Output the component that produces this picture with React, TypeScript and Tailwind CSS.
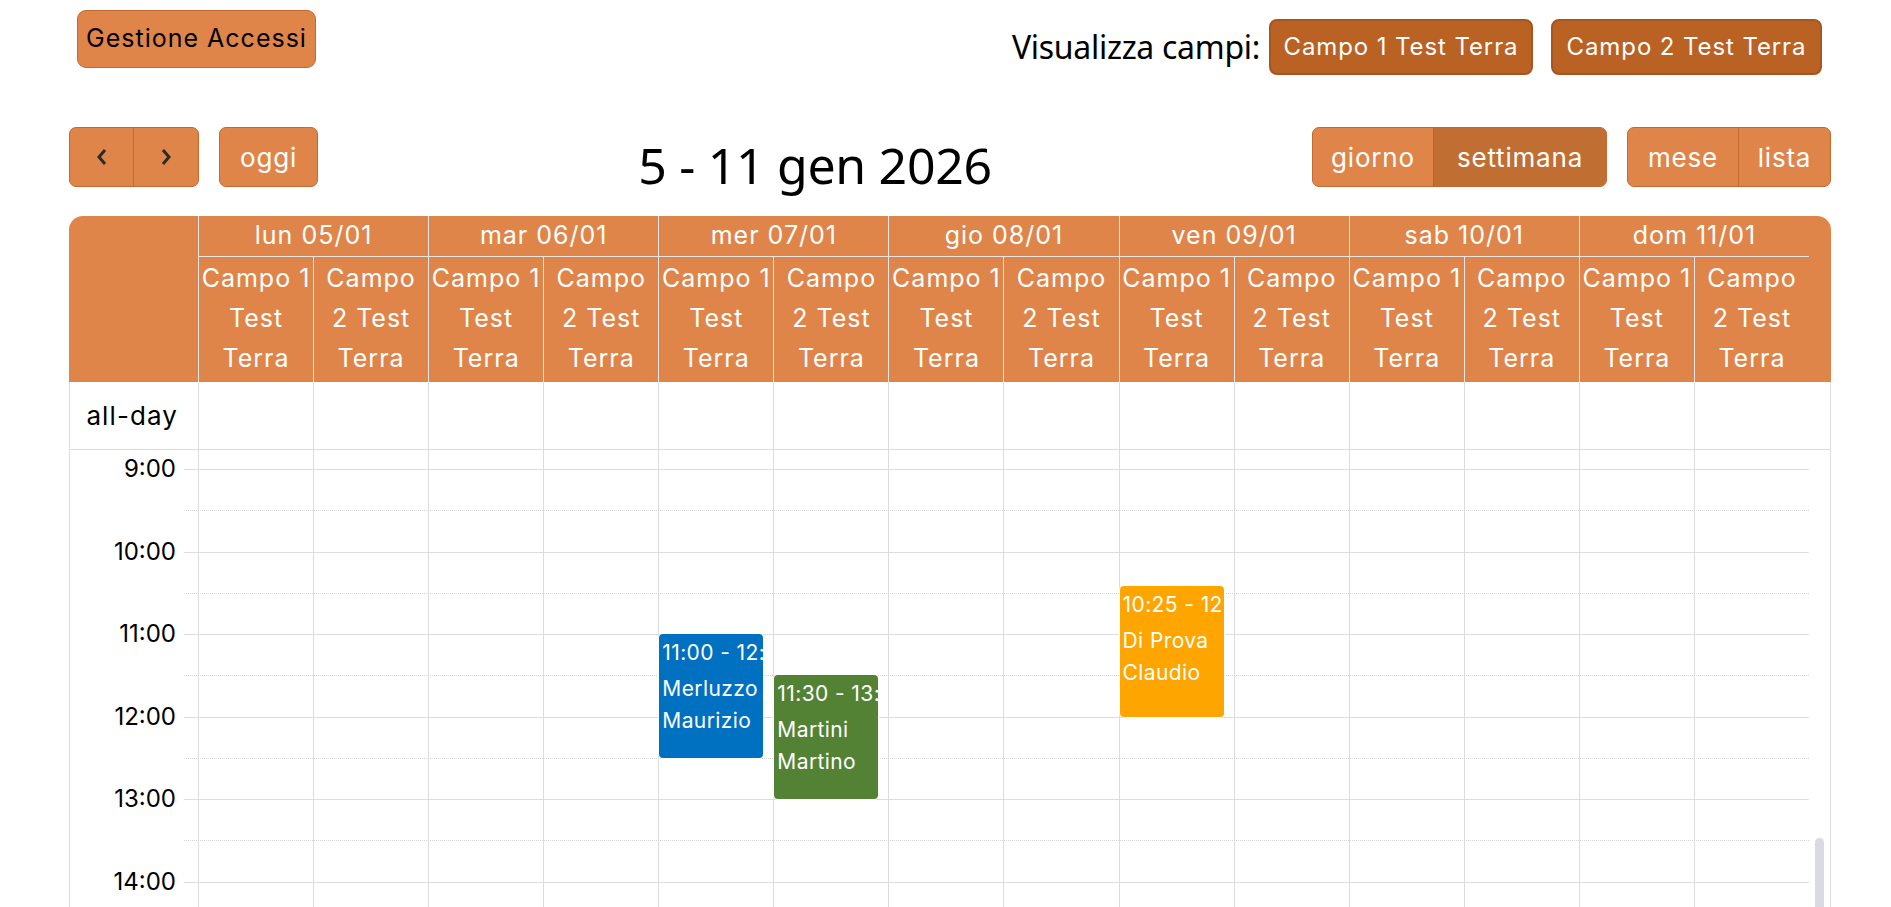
import React from "react";

type CalEvent = {
  lane: number;
  start: number;
  end: number;
  time: string;
  name: string;
  color: string;
};

const days = ["lun 05/01", "mar 06/01", "mer 07/01", "gio 08/01", "ven 09/01", "sab 10/01", "dom 11/01"];

const campi = [
  ["Campo 1", "Test", "Terra"],
  ["Campo", "2 Test", "Terra"],
];

const events: CalEvent[] = [
  { lane: 4, start: 660, end: 750, time: "11:00 - 12:30", name: "Merluzzo Maurizio", color: "bg-[#0070c0]" },
  { lane: 5, start: 690, end: 780, time: "11:30 - 13:00", name: "Martini Martino", color: "bg-[#548235]" },
  { lane: 8, start: 625, end: 720, time: "10:25 - 12:00", name: "Di Prova Claudio", color: "bg-[#ffa500]" },
];

// px between the top of the scroller and the 9:00 line, and height of one 30 min slot
const OFFSET = 19;
const SLOT = 41.25;
const yOf = (min: number) => OFFSET + ((min - 540) / 30) * SLOT;

const slots = Array.from({ length: 12 }, (_, i) => {
  const min = 540 + i * 30;
  const hour = min % 60 === 0;
  return { min, hour, label: hour ? `${min / 60}:00` : "" };
});

const lanes = Array.from({ length: 14 }, (_, i) => i);

function ChevronLeft() {
  return (
    <svg width="12" height="20" viewBox="0 0 12 20" fill="none">
      <polyline points="9,3 3,10 9,17" stroke="#2b2b2b" strokeWidth="3" strokeLinejoin="miter" />
    </svg>
  );
}

function ChevronRight() {
  return (
    <svg width="12" height="20" viewBox="0 0 12 20" fill="none">
      <polyline points="3,3 9,10 3,17" stroke="#2b2b2b" strokeWidth="3" strokeLinejoin="miter" />
    </svg>
  );
}

function TopBar() {
  return (
    <div className="flex h-[127px] items-start justify-between">
      <button className="ml-[77px] mt-[10px] flex h-[58px] w-[239px] items-center justify-center rounded-[9px] border border-[#c4692f] bg-[#e0854a] text-[25px] tracking-[1px] text-black">
        Gestione Accessi
      </button>
      <div className="mr-[69px] mt-[19px] flex items-center">
        <span className="mr-[9px] font-['Noto_Sans',sans-serif] text-[32px] tracking-[-0.3px] text-black">
          Visualizza campi:
        </span>
        <button className="flex h-[56px] w-[264px] items-center justify-center whitespace-nowrap rounded-[8px] border-2 border-[#a6561f] bg-[#ba6124] text-[24px] tracking-[0.9px] text-white">
          Campo 1 Test Terra
        </button>
        <button className="ml-[18px] flex h-[56px] w-[271px] items-center justify-center whitespace-nowrap rounded-[8px] border-2 border-[#a6561f] bg-[#ba6124] text-[24px] tracking-[0.9px] text-white">
          Campo 2 Test Terra
        </button>
      </div>
    </div>
  );
}

function Toolbar() {
  return (
    <div className="ml-[69px] mr-[60px] flex h-[89px] items-start justify-between">
      <div className="flex">
        <div className="flex h-[60px] overflow-hidden rounded-[7px] border border-[#c4692f] bg-[#e0854a]">
          <button className="flex w-[64px] items-center justify-center border-r border-[#c4692f]">
            <ChevronLeft />
          </button>
          <button className="flex w-[64px] items-center justify-center">
            <ChevronRight />
          </button>
        </div>
        <button className="ml-[20px] flex h-[60px] w-[99px] items-center justify-center rounded-[7px] border border-[#c4692f] bg-[#e0854a] text-[26px] tracking-[0.8px] text-white">
          oggi
        </button>
      </div>
      <h2 className="flex h-[60px] items-center pt-[16px] font-['Noto_Sans',sans-serif] text-[50px] leading-none tracking-[-0.3px] text-black">
        5 - 11 gen 2026
      </h2>
      <div className="flex">
        <div className="flex h-[60px] overflow-hidden rounded-[7px] border border-[#c4692f] bg-[#e0854a] text-[26px] tracking-[0.8px] text-white">
          <button className="flex w-[121px] items-center justify-center border-r border-[#b8622a]">giorno</button>
          <button className="flex w-[172px] items-center justify-center bg-[#c16e33]">settimana</button>
        </div>
        <div className="ml-[20px] flex h-[60px] overflow-hidden rounded-[7px] border border-[#c4692f] bg-[#e0854a] text-[26px] tracking-[0.8px] text-white">
          <button className="flex w-[111px] items-center justify-center border-r border-[#c4692f]">mese</button>
          <button className="flex w-[91px] items-center justify-center">lista</button>
        </div>
      </div>
    </div>
  );
}

function Header() {
  return (
    <div className="grid grid-cols-[129px_repeat(14,minmax(0,1fr))_22px] grid-rows-[41px_125px] overflow-hidden rounded-t-[14px] bg-[#e0854a] text-[25px] tracking-[1px] text-white">
      <div className="row-span-2" />
      {days.map((d) => (
        <div key={d} className="col-span-2 flex items-center justify-center border-b border-l border-[#e6e6e6]">
          {d}
        </div>
      ))}
      <div className="row-span-2" />
      {days.map((d) =>
        campi.map((lines, j) => (
          <div key={d + j} className="overflow-hidden border-l border-[#e6e6e6] pt-[1px] text-center leading-[40px]">
            {lines.map((l) => (
              <div key={l} className="whitespace-nowrap">
                {l}
              </div>
            ))}
          </div>
        ))
      )}
    </div>
  );
}

function AllDay() {
  return (
    <div className="grid h-[68px] grid-cols-[128px_repeat(14,minmax(0,1fr))_21px] border-x border-b border-[#dddddd]">
      <div className="flex items-center justify-end pr-[20px] text-[26px] tracking-[1.1px] text-black">all-day</div>
      {lanes.map((l) => (
        <div key={l} className="border-l border-[#dddddd]" />
      ))}
      <div />
    </div>
  );
}

function Body() {
  return (
    <div className="relative h-[457px] overflow-hidden border-x border-[#dddddd]">
      <div className="h-[19px]" />
      {slots.map((s) => (
        <div key={s.min} className="flex h-[41.25px]">
          <div className="w-[114px] shrink-0 pr-[8px] text-right text-[24px] leading-[34px] text-black">
            {s.label && <div className="-mt-[17px]">{s.label}</div>}
          </div>
          <div
            className={
              s.hour
                ? "flex-1 border-t border-solid border-[#dddddd]"
                : "flex-1 border-t border-dotted border-[#d4d4d4]"
            }
          />
          <div className="w-[21px] shrink-0" />
        </div>
      ))}
      <div className="absolute inset-y-0 left-[128px] right-[21px] grid grid-cols-[repeat(14,minmax(0,1fr))]">
        {lanes.map((l) => (
          <div key={l} className="relative border-l border-[#dddddd]">
            {events
              .filter((e) => e.lane === l)
              .map((e) => (
                <div
                  key={e.name}
                  className={`absolute left-0 right-[10px] overflow-hidden rounded-[4px] px-[3px] pt-[2px] text-[21px] tracking-[0.4px] text-white shadow-[0_0_0_1px_#ffffff] ${e.color}`}
                  style={{ top: yOf(e.start), height: yOf(e.end) - yOf(e.start) }}
                >
                  <div className="mb-[3px] whitespace-nowrap leading-[34px]">{e.time}</div>
                  <div className="leading-[32px]">{e.name}</div>
                </div>
              ))}
          </div>
        ))}
      </div>
      <div className="absolute right-[6px] top-[388px] h-[120px] w-[9px] rounded-full bg-[#dadbe0]" />
    </div>
  );
}

export default function App() {
  return (
    <div className="h-[907px] w-[1891px] overflow-hidden bg-white font-['Inter',sans-serif]">
      <TopBar />
      <Toolbar />
      <div className="ml-[69px] w-[1762px]">
        <Header />
        <AllDay />
        <Body />
      </div>
    </div>
  );
}
